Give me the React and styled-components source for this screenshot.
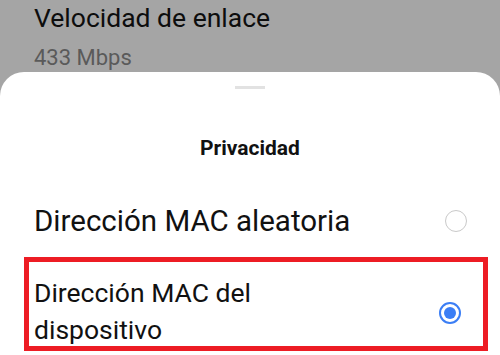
import React from "react";
import styled, { createGlobalStyle } from "styled-components";

const Global = createGlobalStyle`
  html, body { margin: 0; padding: 0; }
  body { width: 500px; height: 355px; overflow: hidden; background: #a5a5a5; font-family: Roboto, "Noto Sans", sans-serif; }
`;

const Screen = styled.div`
  width: 500px;
  height: 355px;
  display: flex;
  flex-direction: column;
  overflow: hidden;
  background: #a5a5a5;
`;

const Behind = styled.div`
  padding: 0 0 0 34px;
  height: 72px;
  flex-shrink: 0;
  box-sizing: border-box;
  display: flex;
  flex-direction: column;
`;

const BehindTitle = styled.div`
  font-size: 26.5px;
  line-height: 30px;
  margin-top: 3px;
  color: #0d0d0d;
`;

const BehindSub = styled.div`
  font-size: 22px;
  line-height: 26px;
  margin-top: 12px;
  color: #5a5a5a;
`;

const Sheet = styled.div`
  flex: 1;
  background: #fff;
  border-radius: 24px 24px 0 0;
  display: flex;
  flex-direction: column;
  align-items: stretch;
  min-height: 0;
`;

const Handle = styled.div`
  align-self: center;
  width: 30px;
  height: 3px;
  background: #e2e2e2;
  margin-top: 14px;
  flex-shrink: 0;
`;

const Title = styled.div`
  text-align: center;
  font-weight: 700;
  font-size: 21px;
  line-height: 24px;
  color: #111;
  margin-top: 47px;
  flex-shrink: 0;
`;

const Option = styled.div`
  display: flex;
  align-items: center;
  justify-content: space-between;
  flex-shrink: 0;
  padding: 0 33px 0 34px;
  margin-top: 44px;
`;

const Highlight = styled.div`
  flex-shrink: 0;
  box-sizing: border-box;
  height: 94px;
  margin: 19px 12px 0 24px;
  border: 5px solid #ed1c24;
  padding: 12px 22px 0 5px;
  overflow: hidden;
  display: flex;
  flex-direction: column;
`;

const HighlightRow = styled.div`
  display: flex;
  align-items: center;
  justify-content: space-between;
  flex-shrink: 0;
`;

const OptionText = styled.div`
  font-size: ${(p) => (p.$multi ? "26.5px" : "29.5px")};
  line-height: ${(p) => (p.$multi ? "37px" : "34px")};
  color: #111;
  max-width: 330px;
`;

const Radio = styled.div`
  width: 22px;
  height: 22px;
  box-sizing: border-box;
  border-radius: 50%;
  flex-shrink: 0;
  margin-top: ${(p) => (p.$checked ? "4px" : "0")};
  border: ${(p) => (p.$checked ? "2px solid #3b7ef5" : "1.5px solid #c9c9c9")};
  display: flex;
  align-items: center;
  justify-content: center;
  &::after {
    content: "";
    display: ${(p) => (p.$checked ? "block" : "none")};
    width: 12px;
    height: 12px;
    border-radius: 50%;
    background: #3b7ef5;
  }
`;

export default function App() {
  return (
    <>
      <Global />
      <Screen>
        <Behind>
          <BehindTitle>Velocidad de enlace</BehindTitle>
          <BehindSub>433 Mbps</BehindSub>
        </Behind>
        <Sheet>
          <Handle />
          <Title>Privacidad</Title>
          <Option>
            <OptionText>Dirección MAC aleatoria</OptionText>
            <Radio />
          </Option>
          <Highlight>
            <HighlightRow>
              <OptionText $multi>Dirección MAC del dispositivo</OptionText>
              <Radio $checked />
            </HighlightRow>
          </Highlight>
        </Sheet>
      </Screen>
    </>
  );
}
